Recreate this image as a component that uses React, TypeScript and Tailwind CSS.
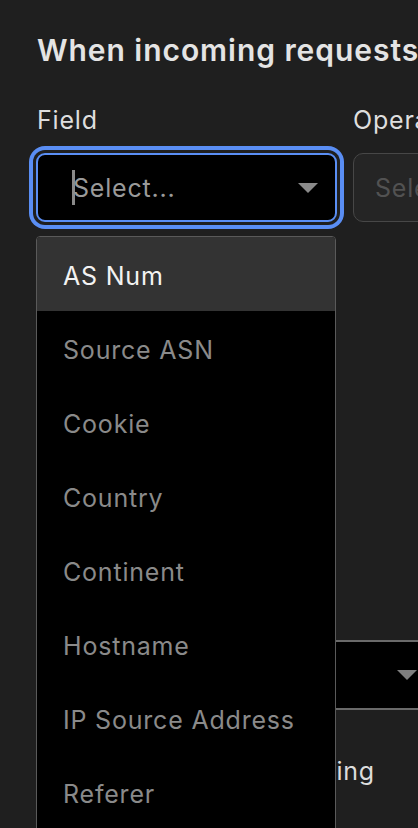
import React from "react";

const Arrow = ({ color = "#8a8a8a" }: { color?: string }) => (
  <svg width="20" height="10" viewBox="0 0 20 10">
    <polygon points="0,0 20,0 10,10" fill={color} />
  </svg>
);

const items = [
  "AS Num",
  "Source ASN",
  "Cookie",
  "Country",
  "Continent",
  "Hostname",
  "IP Source Address",
  "Referer",
  "Request Method",
];

export default function App() {
  return (
    <div
      className="relative w-[418px] h-[828px] overflow-hidden bg-[#1f1f1f]"
      style={{ fontFamily: "Inter, 'Noto Sans', sans-serif" }}
    >
      <div className="pl-[37px] pt-[32px]">
        <h1 className="text-[30px] leading-[36px] font-semibold text-[#e4e4e4] whitespace-nowrap tracking-[0.95px]">
          When incoming requests match…
        </h1>

        <div className="mt-[37px] flex gap-[16px] w-[720px]">
          <div className="relative w-[300px] shrink-0">
            <div className="text-[25px] leading-[30px] text-[#dedede] tracking-[0.8px]">Field</div>
            <div className="mt-[18px] h-[69px] -ml-px rounded-[9px] border-2 border-[#5a8ef4] bg-black shadow-[0_0_0_3px_#1f1f1f,0_0_0_7px_#5a8ef4] flex items-center pl-[34px] pr-[17px]">
              <span className="w-[3px] h-[35px] bg-[#8a8a8a] mr-[-2px]" />
              <span className="flex-1 text-[25px] leading-[30px] text-[#9a9a9a] tracking-[0.8px]">Select...</span>
              <Arrow />
            </div>
          </div>
          <div className="w-[300px] shrink-0">
            <div className="text-[25px] leading-[30px] text-[#dedede] tracking-[0.8px]">Operator</div>
            <div className="mt-[18px] h-[69px] rounded-[10px] border-[1.5px] border-[#474747] bg-[#252525] flex items-center pl-[21px]">
              <span className="text-[25px] leading-[30px] text-[#525252] tracking-[0.8px]">Select...</span>
            </div>
          </div>
        </div>

        <div className="mt-[418px] -ml-px w-[401px] h-[70px] border-y-2 border-[#6a6a6a] bg-black flex items-center justify-end pr-[20px]">
          <Arrow color="#7f7f7f" />
        </div>

        <div className="mt-[46px] w-[338px] text-right text-[25px] leading-[30px] text-[#dcdcdc] whitespace-nowrap tracking-[0.8px]">
          Start monitoring
        </div>
      </div>

      <div className="absolute left-[36px] top-[236px] w-[300px] border border-[#5a5a5a] rounded-t-[4px] bg-black overflow-hidden">
        {items.map((t, i) => (
          <div
            key={t}
            className={
              i === 0
                ? "h-[74px] flex items-center pl-[26px] pt-[6px] bg-[#333333] text-[25px] text-[#f2f2f2] tracking-[0.8px]"
                : "h-[74px] flex items-center pl-[26px] pt-[6px] text-[25px] text-[#8a8a8a] tracking-[0.8px]"
            }
          >
            {t}
          </div>
        ))}
      </div>
    </div>
  );
}
